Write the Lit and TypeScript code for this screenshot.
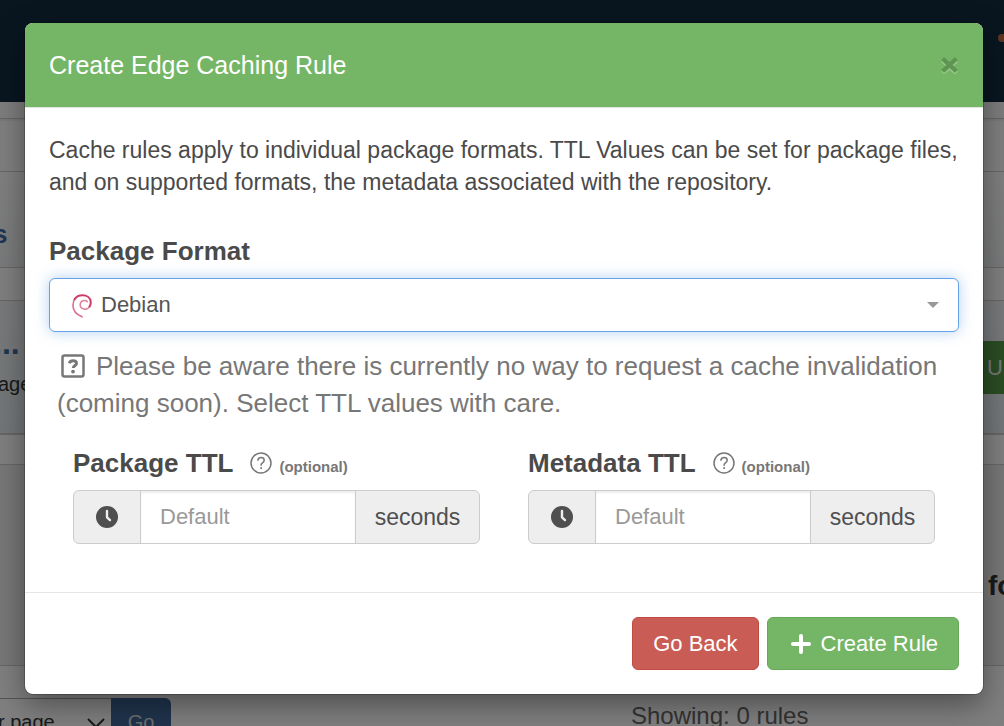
import { LitElement, html, css, svg } from "lit";
import { customElement, property } from "lit/decorators.js";

const debianIcon = html`<svg class="debian" viewBox="0 0 20 24" aria-hidden="true">
  <path class="tail" d="M10 22.800C4.500 20.500 1 16.500 1 11.500C1 8.500 1.800 6 3.300 4.200" />
  <path class="inner" d="M17.800 12.200C16.500 14.600 14.200 15.600 12 15.100C9.400 14.600 7.900 12.500 8.200 10.200C8.500 8 10.400 6.600 12.800 6.600C14 6.600 14.800 7 15.300 7.700" />
  <path class="arc" d="M2.600 5.200C4.500 2.400 7.300 1.300 10.500 1.300C15 1.300 18.300 3.700 18.700 7.500C18.900 9.300 18.500 11 17.600 12.500" />
</svg>`;

const questionGlyph = svg`<path d="M8.900 9.200c.3-1.700 1.400-2.700 3.200-2.700 1.900 0 3.100 1.100 3.100 2.700 0 1.300-.7 1.900-1.700 2.600-1 .700-1.400 1.200-1.400 2.100v.3" /><circle class="dot" cx="12.100" cy="17" r="1" />`;

@customElement("ttl-field")
class TtlField extends LitElement {
  @property() label = "";

  static styles = css`
    :host { display: block; min-width: 0; }
    label { display: flex; align-items: center; height: 32px; font-size: 26px; font-weight: 700; color: #4a4a4a; white-space: nowrap; }
    .help { width: 24px; height: 24px; margin: 0 6px 0 16px; fill: none; stroke: #777; stroke-width: 1.5; stroke-linecap: round; }
    .dot { fill: #777; stroke: none; }
    small { font-size: 15px; color: #777; padding-top: 6px; }
    .group { display: flex; margin-top: 11px; height: 54px; box-sizing: border-box; border: 1px solid #ccc; border-radius: 6px; overflow: hidden; background: #eee; color: #4f4f4f; font-size: 22px; }
    .addon { display: flex; align-items: center; justify-content: center; width: 66px; flex: none; }
    .clock { width: 22px; height: 22px; }
    input { flex: 1; min-width: 0; box-sizing: border-box; border: solid #ccc; border-width: 0 1px; background: #fff; padding: 0 19px; font: inherit; color: #555; outline: none; box-shadow: inset 0 2px 2px rgba(0, 0, 0, 0.07); }
    input::placeholder { color: #999; opacity: 1; }
    .unit { width: 123px; font-size: 23px; }
  `;

  render() {
    return html`
      <label for="ttl">${this.label}
        <svg class="help" viewBox="0 0 24 24" aria-hidden="true"><circle cx="12" cy="12" r="10" />${questionGlyph}</svg>
        <small>(optional)</small>
      </label>
      <div class="group">
        <span class="addon"><svg class="clock" viewBox="0 0 22 22" aria-hidden="true"><circle cx="11" cy="11" r="11" fill="#4f4f4f" /><path d="M11 5v6.300l3 2.800" fill="none" stroke="#eee" stroke-width="2.400" stroke-linecap="round" stroke-linejoin="round" /></svg></span>
        <input id="ttl" type="text" placeholder="Default" />
        <span class="addon unit">seconds</span>
      </div>`;
  }
}

@customElement("page-behind")
class PageBehind extends LitElement {
  static styles = css`
    :host { display: block; height: 100%; overflow: hidden; background: #fff; color: #333; font-size: 20px; }
    .nav { height: 102px; box-sizing: border-box; background: #132d40; display: flex; justify-content: flex-end; padding-top: 34px; }
    .badge { width: 6px; height: 8px; border-radius: 4px 0 0 4px; background: #bd6a40; }
    .strip { height: 16px; background: #fafafa; }
    .crumbs { height: 54px; box-sizing: border-box; border: solid #ccc; border-width: 1px 0; box-shadow: inset 0 2px 2px #eee; }
    .title { height: 96px; box-sizing: border-box; display: flex; align-items: center; padding-top: 30px; border-bottom: 1px solid #ccc; background: linear-gradient(#fff, #f2f4f5); }
    .title b { margin-left: -7px; font-size: 26px; color: #3c6ca8; }
    .gap { height: 32px; }
    .gap.low { height: 29px; }
    .repo { height: 135px; box-sizing: border-box; display: flex; justify-content: space-between; border: solid #ccc; border-width: 1px 0 2px; background: linear-gradient(#f0f3f5, #e6edf2); }
    .name { display: block; margin: 24px 0 12px -7px; font-size: 32px; line-height: 36px; color: #3c6ca8; }
    .text { display: block; margin-left: -2px; }
    .green { width: 21px; height: 53px; margin-top: 40px; padding: 0 0 0 4px; border: 0; background: #559a46; color: #eee; font: inherit; font-size: 22px; text-align: left; overflow: hidden; }
    .empty { height: 202px; box-sizing: border-box; display: flex; align-items: center; justify-content: flex-end; padding-top: 42px; border: solid #ccc; border-width: 1px 0; background: #eee; font-size: 28px; font-weight: 700; }
    .empty span { width: 16px; white-space: nowrap; }
    .pager { display: grid; grid-template-columns: 111px 60px 1fr 373px; margin-top: 32px; align-items: start; }
    .per { height: 48px; box-sizing: border-box; display: flex; align-items: center; justify-content: space-between; border-top: 1px solid #aaa; padding-right: 6px; white-space: nowrap; }
    .chev { width: 18px; height: 10px; fill: none; stroke: #333; stroke-width: 2; }
    .go { height: 48px; border: 0; border-radius: 0 6px 6px 0; background: #40699a; color: #ddd; font: inherit; padding: 0; }
    .count { grid-column: 4; font-size: 24px; line-height: 36px; color: #666; }
  `;

  render() {
    return html`
      <div class="nav"><span class="badge"></span></div>
      <div class="strip"></div>
      <div class="crumbs"></div>
      <div class="title"><b>s</b></div>
      <div class="gap"></div>
      <div class="repo">
        <div><b class="name">...</b><span class="text">age</span></div>
        <button class="green">U</button>
      </div>
      <div class="gap low"></div>
      <div class="empty"><span>fo</span></div>
      <div class="pager">
        <div class="per"><span class="text">r page</span><svg class="chev" viewBox="0 0 18 10" aria-hidden="true"><path d="M1 1l8 8 8-8" /></svg></div>
        <button class="go">Go</button>
        <span class="count">Showing: 0 rules</span>
      </div>`;
  }
}

@customElement("app-root")
class AppRoot extends LitElement {
  static styles = css`
    :host { display: block; position: relative; height: 100vh; overflow: hidden; font-family: "Liberation Sans", Arial, sans-serif; color: #4a4a4a; }
    .backdrop { position: absolute; inset: 0; background: rgba(0, 0, 0, 0.5); padding: 23px 21px 32px 25px; overflow: hidden; }
    .modal { background: #fff; border-radius: 8px; box-shadow: 0 0 0 1px rgba(0, 0, 0, 0.2), 0 10px 30px rgba(0, 0, 0, 0.4); overflow: hidden; font-size: 22px; }
    header { display: flex; justify-content: space-between; align-items: center; padding: 24px; background: #75b666; border-bottom: 1px solid #e5e5e5; color: #fff; }
    h1 { margin: 0; font-size: 25px; font-weight: 400; line-height: 36px; }
    .close { display: flex; border: 0; padding: 1px; background: none; }
    .close svg { width: 17px; height: 17px; fill: none; stroke-width: 4; }
    .main { padding: 26px 24px 48px; }
    p { margin: 0; }
    .intro { font-size: 23px; line-height: 32px; }
    .format { display: block; margin-top: 35px; font-size: 26px; line-height: 36px; font-weight: 700; }
    .picker { position: relative; margin-top: 9px; }
    select { appearance: none; display: block; width: 100%; height: 54px; box-sizing: border-box; padding: 0 48px 2px 51px; border: 1px solid #66a3e6; border-radius: 6px; background: #fff; color: #555; font: inherit; outline: none; box-shadow: 0 0 14px rgba(102, 163, 230, 0.5); }
    .debian { position: absolute; left: 23px; top: 16px; width: 20px; height: 24px; pointer-events: none; fill: none; stroke-linecap: round; }
    .arc { stroke: #d23a66; stroke-width: 2; }
    .tail { stroke: #e0708f; stroke-width: 1.7; }
    .inner { stroke: #e07f9c; stroke-width: 1.5; }
    .caret { position: absolute; right: 20px; top: 24px; width: 12px; height: 6px; pointer-events: none; }
    .note { margin-top: 16px; padding: 0 8px; font-size: 26px; line-height: 37px; color: #777; }
    .note svg { width: 24px; height: 24px; margin: 0 11px 0 4px; vertical-align: -3px; fill: none; stroke: #777; stroke-width: 2.5; }
    .note .dot { fill: #777; stroke: none; }
    .fields { display: grid; grid-template-columns: 1fr 1fr; gap: 48px; margin-top: 25px; padding: 0 24px; }
    footer { display: flex; justify-content: flex-end; gap: 8px; padding: 24px; border-top: 1px solid #e5e5e5; }
    .btn { display: flex; align-items: center; justify-content: center; height: 53px; padding: 0 20px; border-radius: 6px; color: #fff; font: inherit; white-space: nowrap; }
    .back { background: #c95c54; border: 1px solid #c24a42; }
    .create { background: #75b666; border: 1px solid #66a956; }
    .create svg { width: 20px; height: 20px; margin: 0 10px 0 3px; fill: none; stroke: #fff; stroke-width: 4; stroke-linecap: round; }
  `;

  render() {
    return html`
      <page-behind></page-behind>
      <div class="backdrop">
        <section class="modal" role="dialog" aria-labelledby="title">
          <header>
            <h1 id="title">Create Edge Caching Rule</h1>
            <button class="close" aria-label="Close"><svg viewBox="0 0 16 16"><path stroke="#98cc8c" d="M1.500 3.200l13 12M14.500 3.200l-13 12" /><path stroke="#5f9553" d="M1.500 1.500l13 12M14.500 1.500l-13 12" /></svg></button>
          </header>
          <div class="main">
            <p class="intro">Cache rules apply to individual package formats. TTL Values can be set for package files, and on supported formats, the metadata associated with the repository.</p>
            <label class="format" for="format">Package Format</label>
            <div class="picker">
              <select id="format"><option>Debian</option></select>
              ${debianIcon}
              <svg class="caret" viewBox="0 0 12 6" aria-hidden="true"><path fill="#999" d="M0 0h12L6 6z" /></svg>
            </div>
            <p class="note"><svg viewBox="0 0 24 24" aria-hidden="true"><rect x="1.500" y="1.500" width="21" height="21" rx="2" /><path stroke-width="3" d="M8.200 9.200c.7-1.700 1.900-2.500 3.800-2.500 2.100 0 3.500 1 3.500 2.700 0 2-3.200 2.100-3.200 4.600" /><circle class="dot" cx="12" cy="17.600" r="1.900" /></svg>Please be aware there is currently no way to request a cache invalidation (coming soon). Select TTL values with care.</p>
            <div class="fields">
              <ttl-field label="Package TTL"></ttl-field>
              <ttl-field label="Metadata TTL"></ttl-field>
            </div>
          </div>
          <footer>
            <button class="btn back">Go Back</button>
            <button class="btn create"><svg viewBox="0 0 20 20" aria-hidden="true"><path d="M10 2v16M2 10h16" /></svg>Create Rule</button>
          </footer>
        </section>
      </div>`;
  }
}
